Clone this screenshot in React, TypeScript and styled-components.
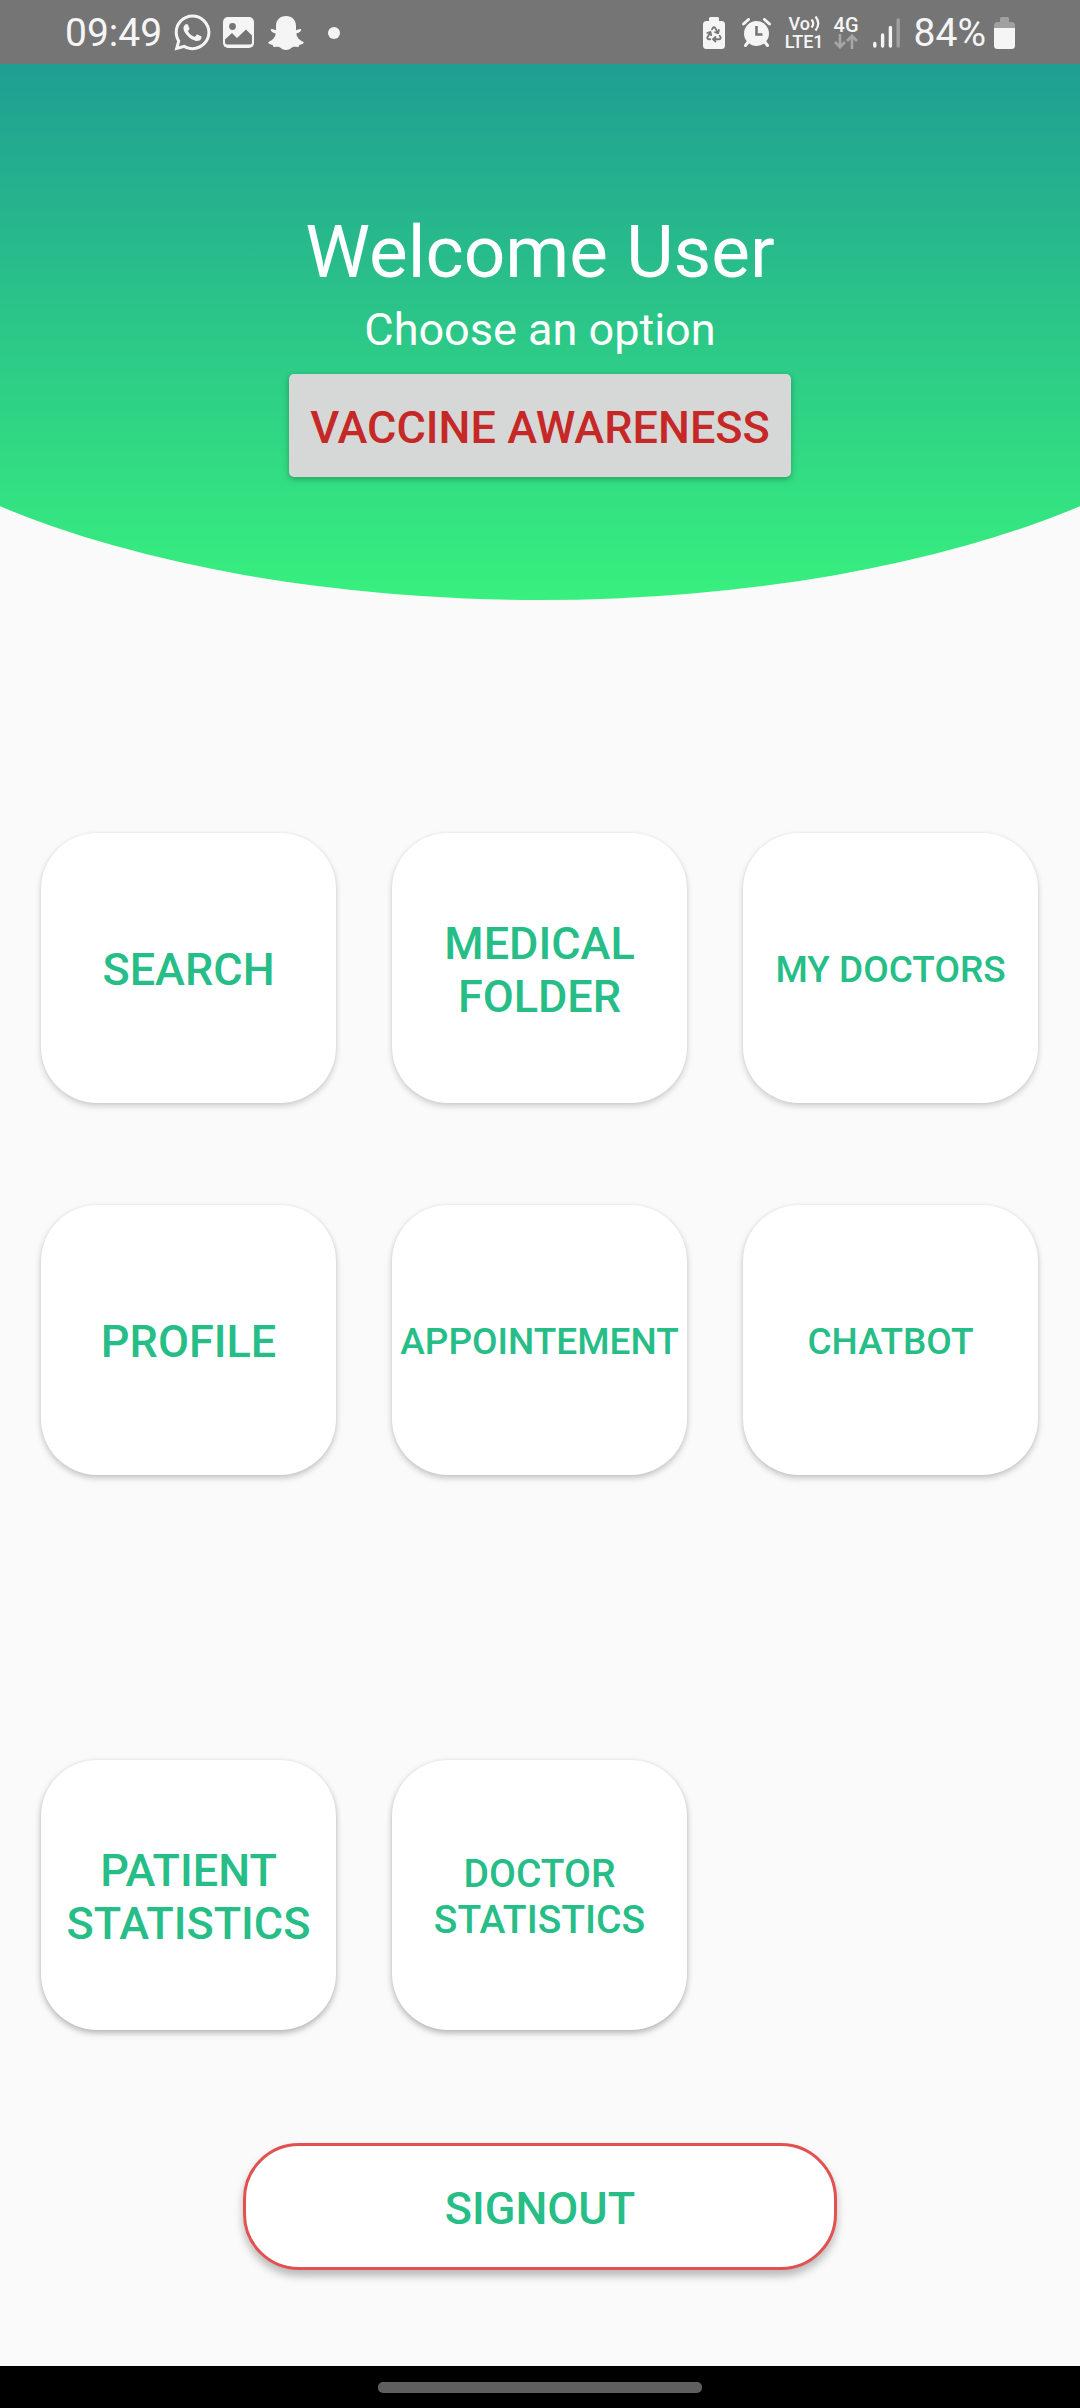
import React from "react";
import styled, { createGlobalStyle } from "styled-components";
import { FaWhatsapp } from "react-icons/fa";
import { Recycle } from "lucide-react";

const GlobalStyle = createGlobalStyle`
  *, *::before, *::after { box-sizing: border-box; }
  body {
    margin: 0;
    background: #fafafa;
    font-family: Roboto, "Noto Sans", sans-serif;
  }
  h1, p { margin: 0; }
  svg { display: block; flex: none; }
`;

const Page = styled.div`
  display: flex;
  flex-direction: column;
  min-height: 100vh;
`;

const StatusBar = styled.div`
  display: flex;
  justify-content: space-between;
  align-items: center;
  height: 64px;
  padding: 1px 65px 0;
  background: #757575;
  color: #f5f5f5;
`;

const StatusGroup = styled.div<{ $gap: number }>`
  display: flex;
  align-items: center;
  gap: ${({ $gap }) => $gap}px;
`;

const StatusText = styled.span`
  font-size: 39px;
  line-height: 46px;
`;

const Network = styled.div`
  display: flex;
  flex-direction: column;
  align-items: center;
`;

const NetworkLine = styled.span<{ $size: number; $weight: number }>`
  display: flex;
  align-items: center;
  font-size: ${({ $size }) => $size}px;
  line-height: 18px;
  font-weight: ${({ $weight }) => $weight};
`;

const Header = styled.header`
  display: flex;
  flex-direction: column;
  align-items: center;
  padding: 145px 24px 123px;
  background: linear-gradient(#1f9e92, #38f07e);
  clip-path: ellipse(71% 323px at 50% 213px);
  color: #fff;
  text-align: center;
`;

const Title = styled.h1`
  font-size: 73px;
  line-height: 86px;
  font-weight: 400;
`;

const Subtitle = styled.p`
  margin-top: 8px;
  font-size: 45px;
  line-height: 53px;
`;

const BaseButton = styled.button`
  border: 0;
  font-family: inherit;
  font-size: 45px;
  line-height: 53px;
  font-weight: 500;
  text-transform: uppercase;
  cursor: pointer;
`;

const AwarenessButton = styled(BaseButton)`
  margin-top: 18px;
  padding: 27px 21px 23px;
  border-radius: 5px;
  background: #d6d8d7;
  color: #c62828;
  box-shadow: 0 2px 6px rgba(0, 0, 0, 0.28);
`;

const Main = styled.main`
  display: flex;
  flex: 1;
  flex-direction: column;
  align-items: center;
  padding: 233px 0 96px;
`;

const Grid = styled.div`
  display: grid;
  grid-template-columns: repeat(3, 1fr);
  gap: 102px 56px;
  width: 100%;
  padding: 0 42px 0 41px;

  & + & { margin-top: 285px; }
`;

const textSizes = {
  small: [37, 44],
  medium: [39, 46],
  large: [45, 53],
};

type TextSize = keyof typeof textSizes;

const Tile = styled(BaseButton)<{ $size: TextSize; $shade: number }>`
  height: 270px;
  min-width: 0;
  padding: 3px 8px 0;
  border-radius: 56px;
  background: #fff;
  color: #26bd87;
  font-size: ${({ $size }) => textSizes[$size][0]}px;
  line-height: ${({ $size }) => textSizes[$size][1]}px;
  box-shadow: 0 3px 6px rgba(0, 0, 0, ${({ $shade }) => $shade}),
    0 0 3px rgba(0, 0, 0, 0.06);
`;

const SignoutButton = styled(BaseButton)`
  width: 55%;
  height: 127px;
  margin-top: 113px;
  padding: 4px 0 0;
  border: 3px solid #e25050;
  border-radius: 56px;
  background: #fff;
  color: #26bd87;
  box-shadow: 0 6px 8px rgba(0, 0, 0, 0.26);
`;

const NavBar = styled.div`
  display: flex;
  justify-content: center;
  align-items: center;
  height: 42px;
  background: #000;
`;

const NavHandle = styled.div`
  width: 30%;
  height: 11px;
  border-radius: 5px;
  background: #5f5f5f;
`;

const GalleryIcon = () => (
  <svg width="31" height="31" viewBox="0 0 31 31">
    <rect width="31" height="31" rx="5" fill="#f5f5f5" />
    <circle cx="9.5" cy="9.5" r="3.4" fill="#757575" />
    <path d="M2 22.5 9 16l5 5 9-8.500 6 6V25.500a2 2 0 0 1-2 2H4a2 2 0 0 1-2-2Z" fill="#757575" />
  </svg>
);

const GhostIcon = () => (
  <svg width="36" height="34" viewBox="0 0 36 34" fill="#f5f5f5">
    <path d="M18 0C12 0 8 4 8 9.800V14.200C6.700 14.200 4.700 12.700 3.200 13.200 2 14 3.200 15.900 7.600 17.600 7.800 20.500 4.600 24.900.4 26 -.2 27.300 1.600 28.400 4.700 28.900 5.200 29.600 4.900 30.700 5.800 30.900 7.600 31.100 9.600 30.500 11.600 31.300 13.700 32.700 15.200 34 18 34S22.300 32.700 24.400 31.300C26.400 30.500 28.400 31.100 30.200 30.900 31.100 30.700 30.800 29.600 31.300 28.900 34.400 28.400 36.200 27.300 35.600 26 31.400 24.900 28.200 20.500 28.400 17.600 32.800 15.900 34 14 32.800 13.200 31.300 12.700 29.300 14.200 28 14.200V9.800C28 4 24 0 18 0Z" />
  </svg>
);

const DotIcon = () => (
  <svg width="12" height="12" viewBox="0 0 12 12" fill="#f5f5f5">
    <circle cx="6" cy="6" r="6" />
  </svg>
);

const SaverIcon = () => (
  <svg width="22" height="32" viewBox="0 0 22 32">
    <path d="M6 4V1.500Q6 0 7.500 0h7Q16 0 16 1.500V4h2.500Q22 4 22 7.500v21Q22 32 18.500 32h-15Q0 32 0 28.500v-21Q0 4 3.500 4Z" fill="#f5f5f5" />
    <Recycle x={2} y={8} width={18} height={18} color="#757575" strokeWidth={2.4} />
  </svg>
);

const AlarmIcon = () => (
  <svg width="29" height="29" viewBox="0 0 29 29">
    <circle cx="14.500" cy="15.500" r="12.500" fill="#f5f5f5" />
    <path d="M1.500 6 6.500 1.500M27.500 6 22.500 1.500M6.500 23.500 3.500 27.500M22.500 23.500 25.500 27.500" stroke="#f5f5f5" strokeWidth="3" strokeLinecap="round" />
    <path d="M14.500 8v8.500h6" fill="none" stroke="#757575" strokeWidth="2.600" />
  </svg>
);

const WavesIcon = () => (
  <svg width="10" height="17" viewBox="0 0 10 17" fill="none" stroke="#f5f5f5" strokeWidth="2.200">
    <path d="M1.500 4.500q3.500 4 0 8M5.500 1.500q5.500 7 0 14" />
  </svg>
);

const DataArrowsIcon = () => (
  <svg width="24" height="15" viewBox="0 0 24 15" fill="none" stroke="#a6a6a6" strokeWidth="2.600">
    <path d="M6 0v13M1 8l5 5.200L11 8M18 15V2M13 7l5-5.200L23 7" />
  </svg>
);

const SignalIcon = () => (
  <svg width="27" height="30" viewBox="0 0 27 30" strokeWidth="3.400" strokeLinecap="round">
    <path d="M1.800 25.500V28M9.600 17v11M17.400 9.500V28" stroke="#f5f5f5" />
    <path d="M25.200 2v26" stroke="#a0a0a0" />
  </svg>
);

const BatteryIcon = () => (
  <svg width="21" height="32" viewBox="0 0 21 32">
    <path d="M0 11V8.500Q0 5 3.500 5H6V1.500Q6 0 7.500 0h6Q15 0 15 1.500V5h2.500Q21 5 21 8.500V11Z" fill="#a0a0a0" />
    <path d="M0 11h21v17.500q0 3.500-3.500 3.500h-14Q0 32 0 28.500Z" fill="#f5f5f5" />
  </svg>
);

interface Option {
  label: string;
  size: TextSize;
  shade: number;
}

const patientOptions: Option[] = [
  { label: "Search", size: "large", shade: 0.18 },
  { label: "Medical Folder", size: "large", shade: 0.18 },
  { label: "My Doctors", size: "small", shade: 0.18 },
  { label: "Profile", size: "large", shade: 0.22 },
  { label: "Appointement", size: "small", shade: 0.22 },
  { label: "Chatbot", size: "small", shade: 0.22 },
];

const statisticsOptions: Option[] = [
  { label: "Patient Statistics", size: "large", shade: 0.28 },
  { label: "Doctor Statistics", size: "medium", shade: 0.28 },
];

const OptionGrid = ({ options }: { options: Option[] }) => (
  <Grid>
    {options.map(({ label, size, shade }) => (
      <Tile key={label} type="button" $size={size} $shade={shade}>
        {label}
      </Tile>
    ))}
  </Grid>
);

export default function App() {
  return (
    <Page>
      <GlobalStyle />
      <StatusBar>
        <StatusGroup $gap={24}>
          <StatusGroup $gap={14}>
            <StatusGroup $gap={10}>
              <StatusText>09:49</StatusText>
              <FaWhatsapp size={41} />
              <GalleryIcon />
            </StatusGroup>
            <GhostIcon />
          </StatusGroup>
          <DotIcon />
        </StatusGroup>
        <StatusGroup $gap={14}>
          <StatusGroup $gap={17}>
            <SaverIcon />
            <AlarmIcon />
          </StatusGroup>
          <StatusGroup $gap={10}>
            <Network>
              <NetworkLine $size={18} $weight={500}>Vo<WavesIcon /></NetworkLine>
              <NetworkLine $size={18} $weight={500}>LTE1</NetworkLine>
            </Network>
            <Network>
              <NetworkLine $size={20} $weight={500}>4G</NetworkLine>
              <DataArrowsIcon />
            </Network>
          </StatusGroup>
          <SignalIcon />
          <StatusGroup $gap={8}>
            <StatusText>84%</StatusText>
            <BatteryIcon />
          </StatusGroup>
        </StatusGroup>
      </StatusBar>
      <Header>
        <Title>Welcome User</Title>
        <Subtitle>Choose an option</Subtitle>
        <AwarenessButton type="button">Vaccine Awareness</AwarenessButton>
      </Header>
      <Main>
        <OptionGrid options={patientOptions} />
        <OptionGrid options={statisticsOptions} />
        <SignoutButton type="button">Signout</SignoutButton>
      </Main>
      <NavBar>
        <NavHandle />
      </NavBar>
    </Page>
  );
}
